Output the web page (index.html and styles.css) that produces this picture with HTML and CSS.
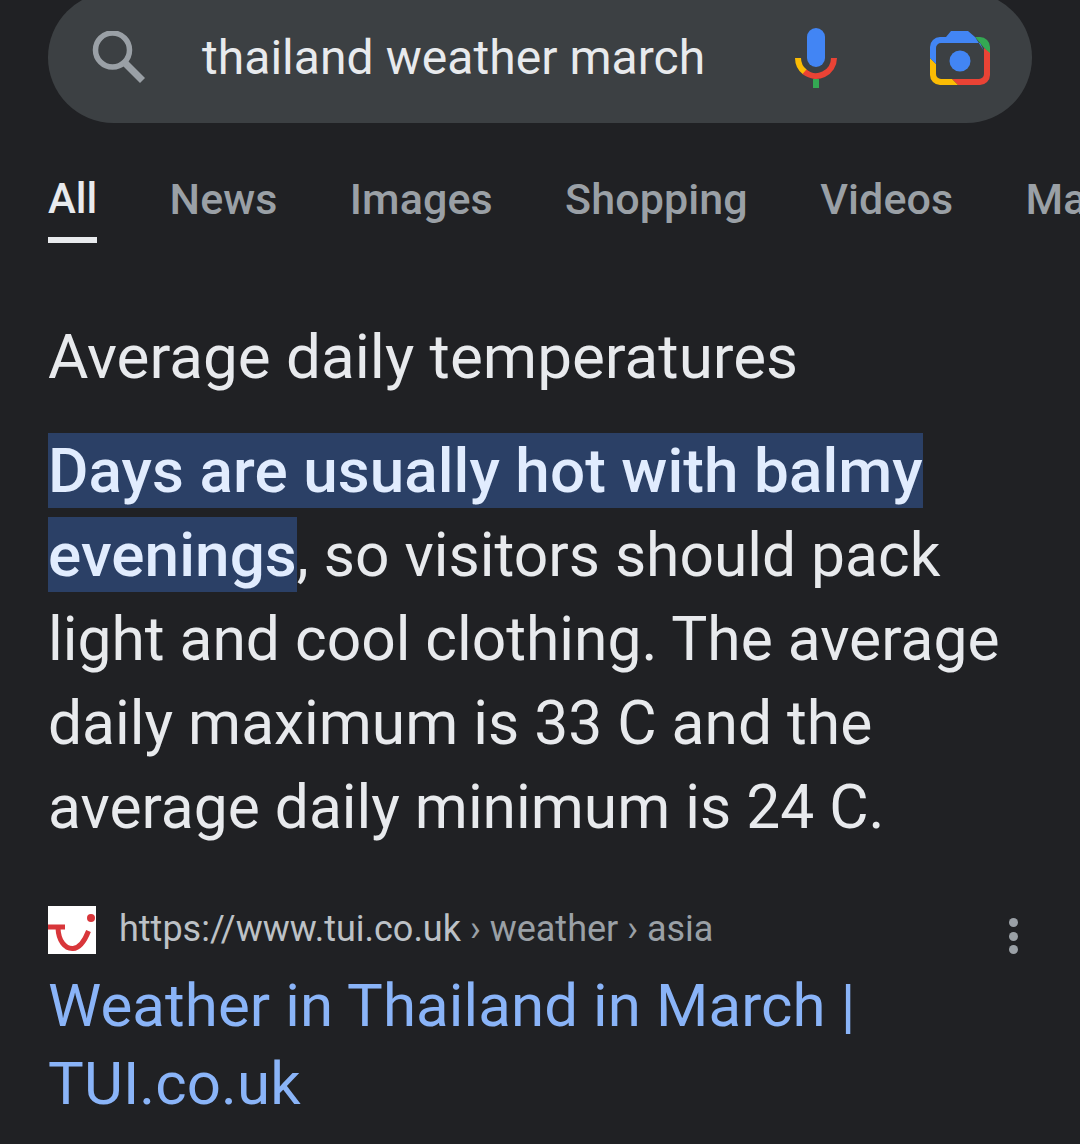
FILE: index.html
```html
<!DOCTYPE html>
<html lang="en">
<head>
<meta charset="utf-8">
<title>thailand weather march</title>
<link rel="stylesheet" href="styles.css">
</head>
<body>
<div class="page">
  <header class="search">
    <svg class="search-icon" width="54" height="54" viewBox="0 0 54 54" fill="none">
      <circle cx="20.500" cy="19" r="17" stroke="#9aa0a6" stroke-width="5.500"/>
      <path d="M32 31 L50.500 49.500" stroke="#9aa0a6" stroke-width="7"/>
    </svg>
    <div class="query">thailand weather march</div>
    <svg class="mic" width="42" height="60" viewBox="0 0 42 60" fill="none">
      <rect x="12" y="0" width="18" height="39" rx="9" fill="#4285f4"/>
      <path d="M3 30 A18 18 0 0 0 10 44.200" stroke="#fbbc04" stroke-width="6"/>
      <path d="M9.500 43.800 A18 18 0 0 0 39 30" stroke="#ea4335" stroke-width="6"/>
      <rect x="18" y="51" width="6" height="9" fill="#34a853"/>
    </svg>
    <svg class="lens" width="60" height="54" viewBox="0 0 60 54">
      <circle cx="30" cy="30" r="10.500" fill="#4285f4"/>
      <path d="M45 6 H50 A10 10 0 0 1 60 16 V24 L50 12 Z" fill="#34a853"/>
      <path d="M60 22 V44 A10 10 0 0 1 50 54 H28 L22 48 H49 A5 5 0 0 0 54 43 V17 Z" fill="#ea4335"/>
      <path d="M0 27 L6 33 V43 A5 5 0 0 0 11 48 H22 L28 54 H10 A10 10 0 0 1 0 44 Z" fill="#fbbc04"/>
      <path d="M0 27 V16 A10 10 0 0 1 10 6 H16 L21 0 H38 L45 6 L54 20 L50 12 H11 A5 5 0 0 0 6 17 V33 Z" fill="#4285f4"/>
    </svg>
  </header>

  <nav class="tabs">
    <a class="tab tab-active">All</a>
    <a class="tab">News</a>
    <a class="tab">Images</a>
    <a class="tab">Shopping</a>
    <a class="tab">Videos</a>
    <a class="tab">Maps</a>
  </nav>

  <main class="content">
    <h1 class="heading">Average daily temperatures</h1>
    <p class="snippet"><span class="hl">Days are usually hot with balmy evenings</span>, so visitors should pack light and cool clothing. The average daily maximum is 33 C and the average daily minimum is 24 C.</p>

    <div class="source">
      <svg class="favicon" width="48" height="48" viewBox="0 0 48 48">
        <rect width="48" height="48" fill="#fff"/>
        <circle cx="43" cy="12" r="4" fill="#d8363a"/>
        <path d="M0 21 H17 M10 22 C10.500 35 17 43 25 42.500 C32 42 37 34 40.500 25" fill="none" stroke="#d8363a" stroke-width="5"/>
      </svg>
      <div class="cite"><span class="domain">https://www.tui.co.uk</span><span class="crumbs"> › weather › asia</span></div>
      <div class="dots"><i></i><i></i><i></i></div>
    </div>
    <a class="result-title">Weather in Thailand in March | TUI.co.uk</a>
  </main>
</div>
</body>
</html>
```
FILE: styles.css
```css
* { box-sizing: border-box; }
html, body { margin: 0; padding: 0; background: #202124; }
body { font-family: Roboto, "Liberation Sans", sans-serif; color: #e8eaed; width: 1080px; height: 1144px; overflow: hidden; }
.page { display: flex; flex-direction: column; }

.search {
  margin: -8px 48px 0;
  height: 131px;
  border-radius: 66px;
  background: #3c4043;
  display: flex;
  align-items: center;
  padding-left: 44px;
}
.search-icon { flex: none; }
.query { font-size: 48px; letter-spacing: .05px; margin-left: 56px; color: #e8eaed; width: 593px; white-space: nowrap; }
.mic { flex: none; }
.lens { flex: none; margin-left: 93px; }

.tabs {
  display: flex;
  gap: 72.300px;
  padding-left: 48px;
  margin-top: 47px;
  height: 100px;
  white-space: nowrap;
  overflow: hidden;
}
.tab { font-size: 43px; letter-spacing: .1px; color: #9aa0a6; font-weight: 500; height: 73px; line-height: 58px; }
.tab-active { color: #e8eaed; font-size: 42px; letter-spacing: 0; border-bottom: 6px solid #e8eaed; }

.content { padding: 0 48px; display: flex; flex-direction: column; }
.heading { margin: 51px 0 0; font-size: 62px; line-height: 72px; font-weight: 400; color: #e8eaed; }
.snippet { margin: 37px 0 0; font-size: 60.500px; line-height: 84px; color: #e8eaed; }
.hl { background: #2b4066; color: #e1ecfe; font-size: 62px; line-height: 70px; font-weight: 500; padding: 1px 0; letter-spacing: .07px; }

.source { display: flex; align-items: center; margin-top: 56px; height: 48px; }
.favicon { flex: none; }
.cite { margin-left: 23px; margin-top: -2px; font-size: 36px; white-space: nowrap; }
.domain { color: #bdc1c6; }
.crumbs { color: #9aa0a6; }
.dots { margin-left: auto; margin-right: 14px; margin-top: 12px; display: flex; flex-direction: column; gap: 4.500px; }
.dots i { display: block; width: 9px; height: 9px; border-radius: 50%; background: #9aa0a6; }
.result-title { display: block; margin-top: 13px; font-size: 60px; letter-spacing: .1px; line-height: 78px; color: #8ab4f8; width: 880px; }
```
